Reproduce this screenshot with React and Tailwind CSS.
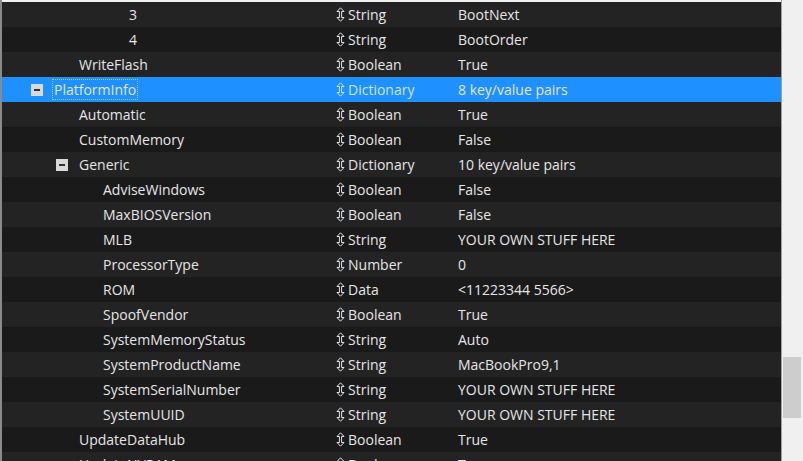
import React from 'react';

// Visible slice of the plist tree
const ROWS = [
  { key: '3', level: 4, type: 'String', value: 'BootNext' },
  { key: '4', level: 4, type: 'String', value: 'BootOrder' },
  { key: 'WriteFlash', level: 2, type: 'Boolean', value: 'True' },
  { key: 'PlatformInfo', level: 1, type: 'Dictionary', value: '8 key/value pairs', open: true, selected: true },
  { key: 'Automatic', level: 2, type: 'Boolean', value: 'True' },
  { key: 'CustomMemory', level: 2, type: 'Boolean', value: 'False' },
  { key: 'Generic', level: 2, type: 'Dictionary', value: '10 key/value pairs', open: true },
  { key: 'AdviseWindows', level: 3, type: 'Boolean', value: 'False' },
  { key: 'MaxBIOSVersion', level: 3, type: 'Boolean', value: 'False' },
  { key: 'MLB', level: 3, type: 'String', value: 'YOUR OWN STUFF HERE' },
  { key: 'ProcessorType', level: 3, type: 'Number', value: '0' },
  { key: 'ROM', level: 3, type: 'Data', value: '<11223344 5566>' },
  { key: 'SpoofVendor', level: 3, type: 'Boolean', value: 'True' },
  { key: 'SystemMemoryStatus', level: 3, type: 'String', value: 'Auto' },
  { key: 'SystemProductName', level: 3, type: 'String', value: 'MacBookPro9,1' },
  { key: 'SystemSerialNumber', level: 3, type: 'String', value: 'YOUR OWN STUFF HERE' },
  { key: 'SystemUUID', level: 3, type: 'String', value: 'YOUR OWN STUFF HERE' },
  { key: 'UpdateDataHub', level: 2, type: 'Boolean', value: 'True' },
  { key: 'UpdateNVRAM', level: 2, type: 'Boolean', value: 'True' },
];

const INDENT = ['', 'pl-[50px]', 'pl-[75px]', 'pl-[99px]', 'pl-[125px]'];

const UpDown = () => (
  <svg width="9" height="15" viewBox="0 0 9 15" className="shrink-0">
    <path
      d="M4.5 0.8 L8 4.5 L5.6 4.5 L5.6 10.5 L8 10.5 L4.5 14.2 L1 10.5 L3.4 10.5 L3.4 4.5 L1 4.5 Z"
      fill="none"
      stroke="currentColor"
      strokeWidth="1"
      strokeLinejoin="round"
    />
  </svg>
);

const MinusBox = () => (
  <span className="absolute -left-[21px] top-1/2 -translate-y-1/2 w-[12px] h-[12px] bg-[#d9d9d9] flex items-center justify-center">
    <span className="w-[6px] h-[2px] bg-[#333]" />
  </span>
);

const Row = ({ row, i }) => {
  const bg = row.selected ? 'bg-[#1e90ff]' : i % 2 === 0 ? 'bg-[#232323]' : 'bg-[#1a1a1a]';
  return (
    <div className={`flex items-center h-[25px] shrink-0 ${bg} text-[#e6e6e6]`}>
      <div className={`w-[330px] shrink-0 ${INDENT[row.level]}`}>
        <span className="relative inline-block">
          {row.open && <MinusBox />}
          <span className={row.selected ? 'border border-dotted border-[#9fcfff] px-[1px]' : 'px-[2px]'}>{row.key}</span>
        </span>
      </div>
      <div className={`w-[126px] shrink-0 flex items-center gap-[3px] pl-[4px] ${row.selected ? 'text-[#cfe6ff]' : ''}`}>
        <UpDown />
        <span>{row.type}</span>
      </div>
      <div className="whitespace-nowrap">{row.value}</div>
    </div>
  );
};

export default function App() {
  return (
    <div
      className="w-[803px] h-[461px] overflow-hidden bg-[#f0f0f0] flex text-[14px] leading-none"
      style={{ fontFamily: '"Open Sans", "Noto Sans", sans-serif' }}
    >
      <div className="w-[2px] shrink-0 bg-[#8a8a8a]" />
      <div className="w-[779px] shrink-0 flex flex-col pt-[2px] overflow-hidden">
        {ROWS.map((row, i) => (
          <Row key={row.key} row={row} i={i} />
        ))}
      </div>
      {/* vertical scrollbar */}
      <div className="flex-1 flex flex-col border-l border-[#a0a0a0] bg-[#f0f0f0] pl-[1px] pr-[2px]">
        <div className="h-[357px] shrink-0" />
        <div className="h-[61px] shrink-0 bg-[#cdcdcd]" />
      </div>
    </div>
  );
}
